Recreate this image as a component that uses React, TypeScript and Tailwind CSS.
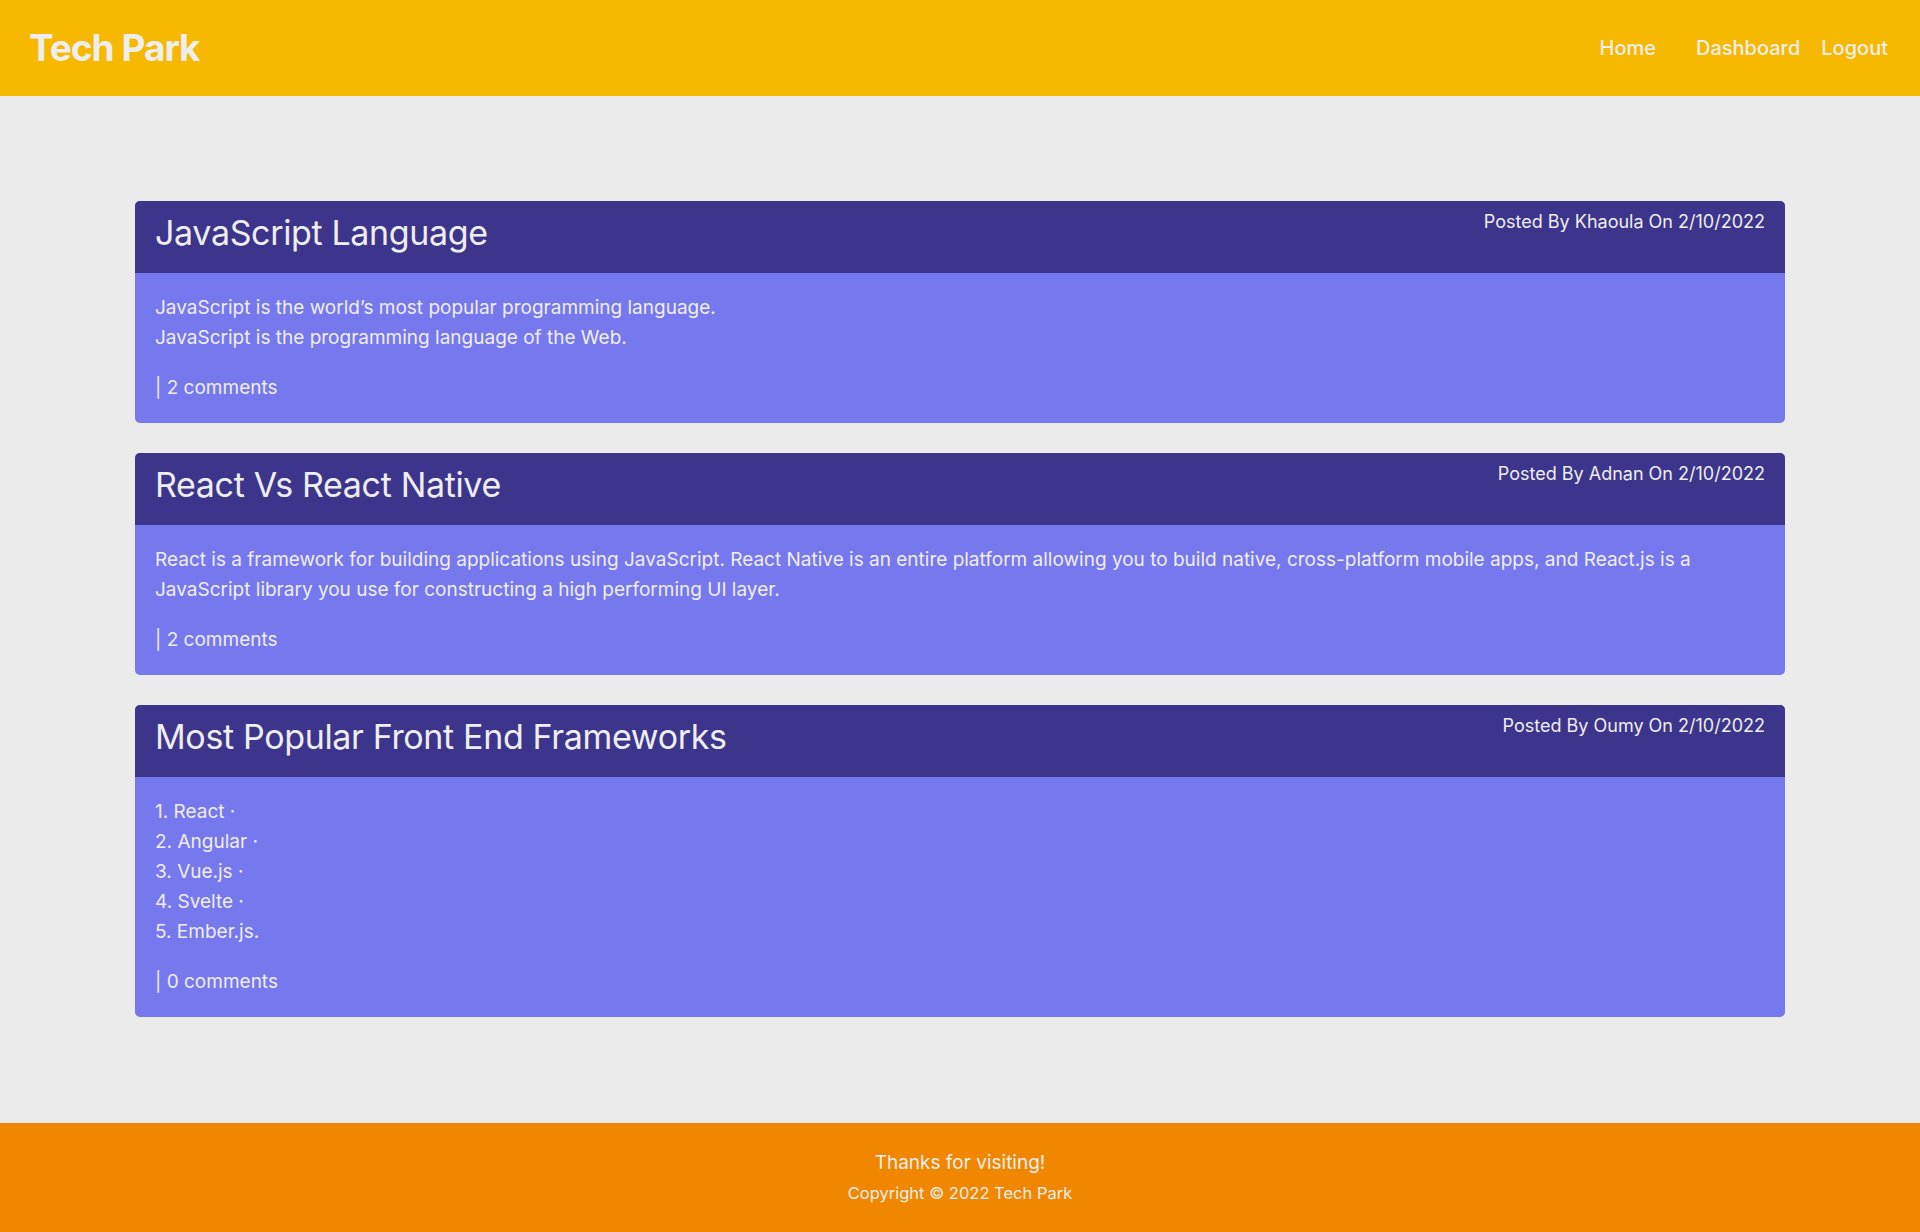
const posts = [
    {
        id: 1,
        title: 'JavaScript Language',
        author: 'Khaoula',
        date: '2/10/2022',
        body: ['JavaScript is the world’s most popular programming language.', 'JavaScript is the programming language of the Web.'],
        comments: 2,
    },
    {
        id: 2,
        title: 'React Vs React Native',
        author: 'Adnan',
        date: '2/10/2022',
        body: ['React is a framework for building applications using JavaScript. React Native is an entire platform allowing you to build native, cross-platform mobile apps, and React.js is a JavaScript library you use for constructing a high performing UI layer.'],
        comments: 2,
    },
    {
        id: 3,
        title: 'Most Popular Front End Frameworks',
        author: 'Oumy',
        date: '2/10/2022',
        body: ['1. React ·', '2. Angular ·', '3. Vue.js ·', '4. Svelte ·', '5. Ember.js.'],
        comments: 0,
    },
];

export default function App() {
    return (
        <div className="min-h-[1232px] flex flex-col bg-[#ebebeb] text-[#eeeeee] font-['Inter','Noto_Sans',sans-serif]">
            {/* HEADER */}
            <header className="h-24 bg-[#f7b801] flex items-center justify-between pl-[29px] pr-[32px]">
                <a href="#" className="text-[37px] font-bold tracking-[-1px] text-[#eeeeee]">Tech Park</a>
                <nav className="flex items-center text-[20px] font-medium">
                    <a href="#" className="mr-[40px]">Home</a>
                    <a href="#" className="mr-[21px]">Dashboard</a>
                    <a href="#">Logout</a>
                </nav>
            </header>

            {/* POSTS */}
            <main className="flex-1 px-[135px] pt-[105px] pb-[106px] flex flex-col gap-[30px]">
                {posts.map((post) => (
                    <div key={post.id} className="rounded-[5px] overflow-hidden bg-[#7678ed]">
                        <div className="h-[72px] bg-[#3d348b] flex justify-between items-start pl-5 pr-5 pt-[7px]">
                            <h2 className="text-[34px] leading-[41px] mt-[4px] tracking-[-0.35px]">{post.title}</h2>
                            <p className="text-[18px] leading-[27px]">Posted By {post.author} On {post.date}</p>
                        </div>
                        <div className="p-5 text-[19px] leading-[30px]">
                            <div>
                                {post.body.map((line) => (
                                    <p key={line}>{line}</p>
                                ))}
                            </div>
                            <p className="mt-5">| {post.comments} comments</p>
                        </div>
                    </div>
                ))}
            </main>

            {/* FOOTER */}
            <footer className="h-[110px] bg-[#f18701] flex flex-col items-center justify-center">
                <p className="text-[19px] leading-[30px]">Thanks for visiting!</p>
                <p className="text-[16.5px] leading-[30px]">Copyright © 2022 Tech Park</p>
            </footer>
        </div>
    );
}
